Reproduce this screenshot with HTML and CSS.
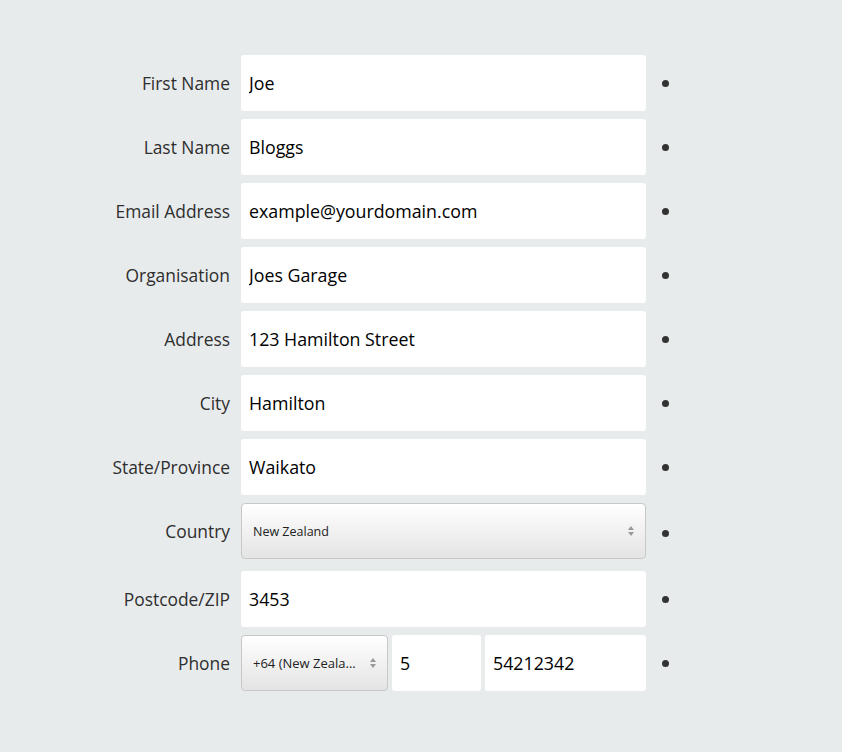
FILE: index.html
```
<!DOCTYPE html>
<html>
<head>
<meta charset="utf-8">
<link rel="stylesheet" href="styles.css">
</head>
<body>
<form class="form">
  <label class="lbl">First Name</label>
  <input class="field" type="text" value="Joe">
  <span class="dot"></span>

  <label class="lbl">Last Name</label>
  <input class="field" type="text" value="Bloggs">
  <span class="dot"></span>

  <label class="lbl">Email Address</label>
  <input class="field" type="text" value="example@yourdomain.com">
  <span class="dot"></span>

  <label class="lbl">Organisation</label>
  <input class="field" type="text" value="Joes Garage">
  <span class="dot"></span>

  <label class="lbl">Address</label>
  <input class="field" type="text" value="123 Hamilton Street">
  <span class="dot"></span>

  <label class="lbl">City</label>
  <input class="field" type="text" value="Hamilton">
  <span class="dot"></span>

  <label class="lbl">State/Province</label>
  <input class="field" type="text" value="Waikato">
  <span class="dot"></span>

  <label class="lbl lbl-select">Country</label>
  <div class="select-wrap">
    <div class="select">
      <span class="select-text">New Zealand</span>
      <svg class="arrows" width="8" height="12" viewBox="0 0 8 12"><path d="M4 1 L7 5 L1 5 Z" fill="#999"/><path d="M1 7 L7 7 L4 11 Z" fill="#999"/></svg>
    </div>
  </div>
  <span class="dot"></span>

  <label class="lbl">Postcode/ZIP</label>
  <input class="field" type="text" value="3453">
  <span class="dot"></span>

  <label class="lbl">Phone</label>
  <div class="phone">
    <div class="select select-code">
      <span class="select-text code-text">+64 (New Zeala...</span>
      <svg class="arrows" width="8" height="12" viewBox="0 0 8 12"><path d="M4 1 L7 5 L1 5 Z" fill="#999"/><path d="M1 7 L7 7 L4 11 Z" fill="#999"/></svg>
    </div>
    <input class="field area" type="text" value="5">
    <input class="field number" type="text" value="54212342">
  </div>
  <span class="dot"></span>
</form>
</body>
</html>
```
FILE: styles.css
```
html, body {
  margin: 0;
  padding: 0;
  background: #e8ebec;
  font-family: "Open Sans", "Noto Sans", sans-serif;
}
body {
  height: 752px;
}
.form {
  display: grid;
  grid-template-columns: 230px 405px 40px;
  column-gap: 11px;
  row-gap: 8px;
  padding-top: 55px;
  align-items: center;
}
.lbl {
  text-align: right;
  font-size: 17.4px;
  color: #2e2e2e;
  line-height: 56px;
}
.lbl-select {
  align-self: start;
}
.field {
  box-sizing: border-box;
  height: 56px;
  width: 100%;
  border: none;
  border-radius: 3px;
  background: #fff;
  padding: 0 8px;
  font-family: inherit;
  font-size: 17.8px;
  color: #000;
  outline: none;
  margin: 0;
}
.dot {
  width: 7px;
  height: 7px;
  border-radius: 50%;
  background: #333;
  margin-left: 5px;
}
.select-wrap {
  height: 60px;
}
.select {
  box-sizing: border-box;
  height: 56px;
  border: 1px solid #c8c8c8;
  border-radius: 4px;
  background: linear-gradient(#ffffff, #e4e4e4);
  display: flex;
  align-items: center;
  justify-content: space-between;
  padding: 0 10px 0 11px;
}
.select-text {
  font-size: 12.5px;
  color: #222;
}
.arrows {
  display: block;
}
.phone {
  display: flex;
  gap: 4px;
}
.select-code {
  width: 147px;
  flex: none;
}
.code-text {
  font-size: 13px;
}
.area {
  width: 89px;
  flex: none;
}
.number {
  flex: 1;
}
```
